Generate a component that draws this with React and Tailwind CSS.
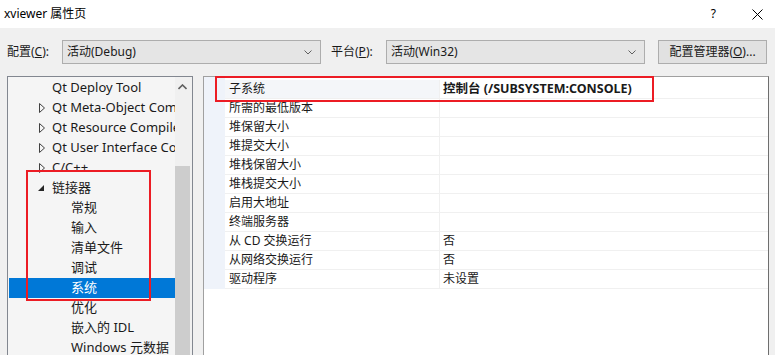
import React from "react";

const ui = "font-['Noto_Sans','Noto_Sans_CJK_SC',sans-serif]";

const treeItems = [
  { label: "Qt Deploy Tool", level: 0 },
  { label: "Qt Meta-Object Compiler", level: 0, arrow: "closed" },
  { label: "Qt Resource Compiler", level: 0, arrow: "closed" },
  { label: "Qt User Interface Compiler", level: 0, arrow: "closed" },
  { label: "C/C++", level: 0, arrow: "closed" },
  { label: "链接器", level: 0, arrow: "open" },
  { label: "常规", level: 1 },
  { label: "输入", level: 1 },
  { label: "清单文件", level: 1 },
  { label: "调试", level: 1 },
  { label: "系统", level: 1, selected: true },
  { label: "优化", level: 1 },
  { label: "嵌入的 IDL", level: 1 },
  { label: "Windows 元数据", level: 1 },
];

const props = [
  { name: "子系统", value: "控制台 (/SUBSYSTEM:CONSOLE)", bold: true, active: true },
  { name: "所需的最低版本", value: "" },
  { name: "堆保留大小", value: "" },
  { name: "堆提交大小", value: "" },
  { name: "堆栈保留大小", value: "" },
  { name: "堆栈提交大小", value: "" },
  { name: "启用大地址", value: "" },
  { name: "终端服务器", value: "" },
  { name: "从 CD 交换运行", value: "否" },
  { name: "从网络交换运行", value: "否" },
  { name: "驱动程序", value: "未设置" },
];

const Chevron = () => (
  <svg width="8" height="5" viewBox="0 0 8 5" className="shrink-0">
    <polyline points="0.5,0.5 4,4 7.5,0.5" fill="none" stroke="#606060" strokeWidth="1" />
  </svg>
);

const Dropdown = ({ text }) => (
  <div className="flex h-[24px] w-[259px] items-center justify-between border border-[#adadad] bg-[#e5e5e5] pl-[4px] pr-[8px]">
    <span>{text}</span>
    <Chevron />
  </div>
);

const Arrow = ({ type }) => {
  if (type === "closed")
    return (
      <svg width="6" height="10" viewBox="0 0 6 10">
        <polygon points="0.5,0.5 5.5,5 0.5,9.5" fill="none" stroke="#404040" strokeWidth="1" />
      </svg>
    );
  if (type === "open")
    return (
      <svg width="7" height="7" viewBox="0 0 7 7">
        <polygon points="6,0 6,6 0,6" fill="#262626" />
      </svg>
    );
  return null;
};

const App = () => {
  return (
    <div className={`relative h-[355px] w-[775px] overflow-hidden bg-[#f0f0f0] text-[12px] text-[#1a1a1a] ${ui}`}>
      <div className="flex h-[28px] items-center justify-between bg-white pl-[4px] pr-[12px]">
        <span className="text-[12px] text-black">xviewer 属性页</span>
        <div className="flex items-center gap-[36px]">
          <span className="text-[12px] text-black">?</span>
          <svg width="11" height="11" viewBox="0 0 11 11">
            <path d="M0.5 0.5 L10.5 10.5 M10.5 0.5 L0.5 10.5" stroke="#000" strokeWidth="1" />
          </svg>
        </div>
      </div>

      <div className="flex h-[48px] items-center pl-[7px]">
        <span className="w-[55px]">配置(<span className="underline">C</span>):</span>
        <Dropdown text="活动(Debug)" />
        <span className="ml-[10px] w-[55px]">平台(<span className="underline">P</span>):</span>
        <Dropdown text="活动(Win32)" />
        <div className="ml-[13px] flex h-[24px] w-[109px] items-center justify-center border border-[#adadad] bg-[#e1e1e1]">
          配置管理器(<span className="underline">O</span>)...
        </div>
      </div>

      <div className="flex pl-[7px]">
        <div className="flex h-[290px] w-[186px] border border-b-0 border-[#828790] bg-[#f5f5f5]">
          <div className="w-[167px] overflow-hidden pt-[1px] text-[13px]">
            {treeItems.map((item) => (
              <div
                key={item.label}
                className={`ml-[1px] flex h-[20px] items-center whitespace-nowrap ${item.selected ? "bg-[#0078d7] text-white" : "text-[#1a1a1a]"}`}
              >
                <div className="flex w-[43px] shrink-0 items-center justify-end pr-[7px]">
                  <Arrow type={item.arrow} />
                </div>
                <span className={item.level === 1 ? "pl-[19px]" : ""}>{item.label}</span>
              </div>
            ))}
          </div>
          <div className="flex w-[17px] flex-col bg-[#f0f0f0]">
            <div className="flex h-[16px] w-[15px] items-center justify-center pt-[4px]">
              <svg width="9" height="6" viewBox="0 0 9 6">
                <polyline points="0.5,5 4.5,1 8.5,5" fill="none" stroke="#606060" strokeWidth="1.6" />
              </svg>
            </div>
            <div className="mt-[73px] h-[200px] w-[15px] bg-[#cdcdcd]" />
          </div>
        </div>

        <div className="ml-[10px] flex h-[290px] w-[566px] border border-r-[#6e6e6e] border-b-0 border-[#a0a0a0] bg-white">
          <div className="h-[212px] w-[21px] bg-[#eff3fa]" />
          <div className="flex-1 pt-[3px]">
            {props.map((p) => (
              <div key={p.name} className="flex h-[19px] border-b border-[#f0f0f0]">
                <div className={`flex w-[215px] items-center border-r border-[#f0f0f0] pl-[4px] ${p.active ? "bg-[#f4f6f9]" : ""}`}>
                  {p.name}
                </div>
                <div className={`flex flex-1 items-center pl-[3px] ${p.bold ? "text-[12.5px] font-bold" : ""}`}>{p.value}</div>
              </div>
            ))}
          </div>
        </div>
      </div>

      <div className="absolute left-[26px] top-[170px] h-[131px] w-[125px] border-2 border-[#ec1c24]" />
      <div className="absolute left-[215px] top-[76px] h-[26px] w-[439px] border-2 border-[#ec1c24]" />
    </div>
  );
};

export default App;
